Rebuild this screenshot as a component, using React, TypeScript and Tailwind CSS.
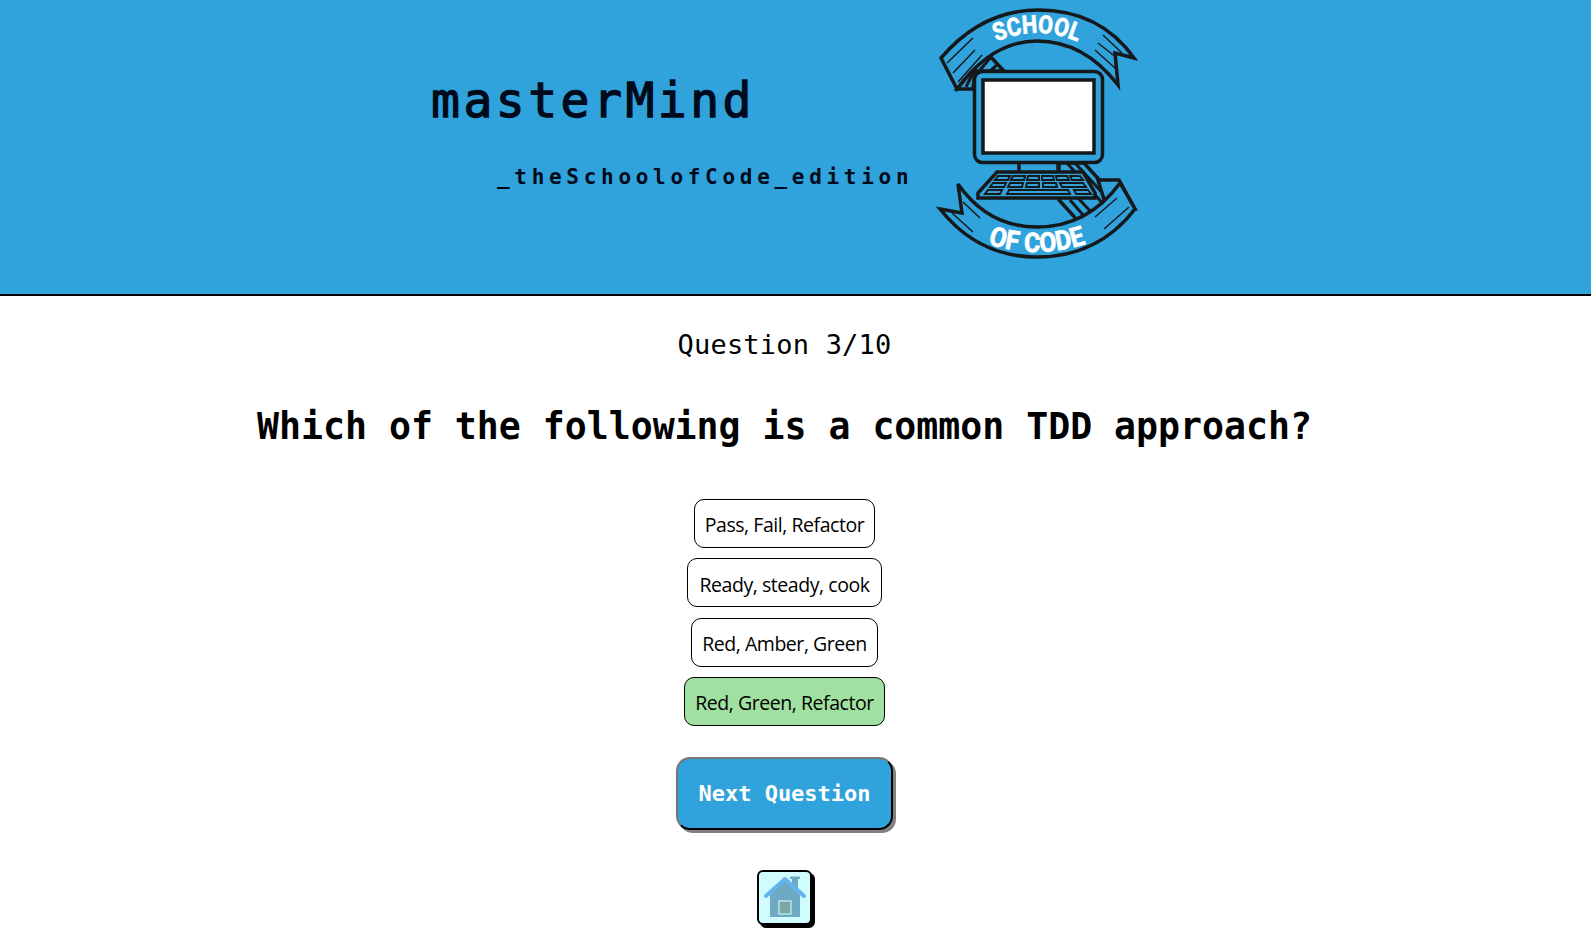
import React from "react";

const mono = "[font-family:'DejaVu_Sans_Mono',monospace]";

const answers = [
  { label: "Pass, Fail, Refactor", width: "w-[181px]", correct: false },
  { label: "Ready, steady, cook", width: "w-[195px]", correct: false },
  { label: "Red, Amber, Green", width: "w-[187px]", correct: false },
  { label: "Red, Green, Refactor", width: "w-[201px]", correct: true },
];

function Logo() {
  const ink = "#16191c";
  const blue = "#30a2dc";
  return (
    <svg width="240" height="270" viewBox="0 0 240 270" fill="none" stroke={ink} strokeWidth="3.500" strokeLinejoin="miter">
      {/* top ribbon fold */}
      <path d="M67 53 L84 71 L55 71 L53 89 L37 89 Z" fill={blue} />
      <path d="M71 57 L60 70 M64 50 L53 66 M78 64 L70 71 M53 73 L46 87 M47 68 L42 80" strokeWidth="3" />
      {/* top ribbon */}
      <path d="M21 58 Q62 10 118 10 Q180 10 214 58 L195 53 L198 85 Q164 41 117 41 Q72 41 37 89 Z" fill={blue} />
      <path d="M27 63 L53 38 M33 73 L55 50 M38 82 L62 55 M183 35 L202 53 M178 43 L197 58 M175 50 L195 68" strokeWidth="1.500" />
      {/* stripes behind the monitor */}
      <path d="M139 163 L164 163 L205 208 L168 232 L139 200 Z" fill={blue} />
      <path d="M147 163 L192 214 M155 163 L199 211" strokeWidth="3" />
      <path d="M150 200 L178 232 M158 198 L186 228" strokeWidth="3" />
      {/* monitor */}
      <rect x="99" y="160" width="39" height="16" fill={blue} stroke="none" />
      <path d="M99 163 V172 M138 163 V172" />
      <rect x="54.500" y="71.500" width="128" height="91" rx="8" fill={blue} />
      <rect x="63" y="80" width="111" height="73" fill="#fff" />
      {/* keyboard */}
      <path d="M77 172 H163 L175 193 V198 H58 V193 Z" fill={blue} />
      <g strokeWidth="2">
        <path d="M78 176 H90 L88 180 H75 Z M93 176 H105 L104 180 H91 Z M108 176 H119 L119 180 H107 Z M122 176 H133 L134 180 H122 Z M136 176 H147 L149 180 H137 Z M150 176 H160 L163 180 H152 Z" />
        <path d="M73 183 H86 L84 187 H70 Z M90 183 H103 L102 187 H88 Z M107 183 H119 L119 187 H106 Z M123 183 H136 L137 187 H123 Z M140 183 H163 L166 187 H142 Z" />
        <path d="M68 190 H82 L80 194 H65 Z M89 190 H148 L150 194 H87 Z M154 190 H168 L171 194 H156 Z" />
      </g>
      {/* bottom ribbon fold */}
      <path d="M178 180 H199 L215 209 L188 212 Z" fill={blue} />
      {/* bottom ribbon */}
      <path d="M20 209 L42 213 L38 184 Q68 227 117 227 Q168 227 200 183 L215 209 Q178 257 117 257 Q58 257 20 209 Z" fill={blue} />
      <path d="M43 202 L60 218 M32 213 L53 232 M175 217 L197 198 M184 229 L209 207" strokeWidth="1.500" />
      <path id="logo-top" d="M60 50 Q117 16 174 50" stroke="none" />
      <path id="logo-bottom" d="M50 237 Q117 267 184 237" stroke="none" />
      <text fill="#fff" stroke="#fff" strokeWidth="0.700" fontSize="25" fontWeight="700" fontFamily="'Liberation Sans Narrow', Roboto, sans-serif" textAnchor="middle">
        <textPath href="#logo-top" startOffset="50%" textLength="84" lengthAdjust="spacingAndGlyphs">SCHOOL</textPath>
      </text>
      <text fill="#fff" stroke="#fff" strokeWidth="0.700" fontSize="27" fontWeight="700" fontFamily="'Liberation Sans Narrow', Roboto, sans-serif" textAnchor="middle">
        <textPath href="#logo-bottom" startOffset="50%" textLength="100" lengthAdjust="spacingAndGlyphs">OF CODE</textPath>
      </text>
    </svg>
  );
}

function HomeIcon() {
  return (
    <svg width="44" height="44" viewBox="0 0 44 44">
      <path d="M29 3 H35 V20 H29 Z" fill="#6fa9c4" />
      <rect x="27" y="1.500" width="10" height="2.500" fill="#6fa9c4" />
      <path d="M22 5 L37 20 V42 H7 V20 Z" fill="#6fa9c4" />
      <path d="M3 21 L22 4 L41 21" fill="none" stroke="#63b4ee" strokeWidth="4" strokeLinecap="round" strokeLinejoin="round" />
      <rect x="16" y="26" width="12" height="13" fill="#7ba6a6" stroke="#b6e6e6" strokeWidth="1.500" />
    </svg>
  );
}

export default function App() {
  return (
    <div className="min-h-[942px] bg-white">
      <header className="flex h-[296px] items-start justify-center border-b-2 border-black bg-[#30a2dc]">
        <div className={`${mono} w-[489px] shrink-0 text-[#000a1a]`}>
          <h1 className="mt-[72px] h-[56px] text-[48px] leading-[56px] font-normal tracking-[3.500px] [-webkit-text-stroke:1.300px_#000a1a]">masterMind</h1>
          <p className="mt-[35px] ml-[66px] text-[21px] leading-[28px] font-bold tracking-[4.700px] whitespace-nowrap">_theSchoolofCode_edition</p>
        </div>
        <Logo />
      </header>

      <main className={`${mono} flex flex-col items-center pr-[22px] text-black`}>
        <p className="mt-[31px] text-[27px] leading-[36px] tracking-[0.200px]">Question 3/10</p>
        <h2 className="mt-[40px] text-[36.500px] leading-[48px] font-bold whitespace-nowrap">Which of the following is a common TDD approach?</h2>

        <div className="mt-[48px] flex flex-col items-center gap-[10.300px] font-['Open_Sans',sans-serif]">
          {answers.map((a) => (
            <button
              key={a.label}
              className={`h-[49px] rounded-[10px] border border-black pt-[3px] text-[19.500px] tracking-[-0.450px] text-black ${a.width} ${
                a.correct ? "bg-[#a0e0a0]" : "bg-white"
              }`}
            >
              {a.label}
            </button>
          ))}
        </div>

        <button className="mt-[31px] h-[73px] w-[217px] rounded-[14px] border-2 border-t-[#767676] border-l-[#767676] border-r-black border-b-black bg-[#30a2dc] text-[22px] font-bold text-white shadow-[3px_3px_0_#808080]">
          Next Question
        </button>

        <button className="mt-[40px] flex h-[55px] w-[55px] items-center justify-center rounded-[6px] border-2 border-black bg-[#d0fcff] shadow-[3px_3px_0_#000]">
          <HomeIcon />
        </button>
      </main>
    </div>
  );
}
